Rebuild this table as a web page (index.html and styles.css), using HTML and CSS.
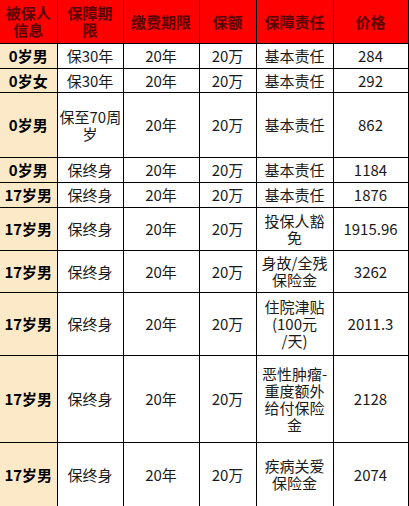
FILE: index.html
```html
<!DOCTYPE html>
<html lang="zh">
<head>
<meta charset="utf-8">
<title>保险价格表</title>
<link rel="stylesheet" href="styles.css">
</head>
<body>
<table class="tbl">
  <colgroup>
    <col class="c1"><col class="c2"><col class="c3"><col class="c4"><col class="c5"><col class="c6">
  </colgroup>
  <tr class="head">
    <th>被保人<br>信息</th><th>保障期<br>限</th><th>缴费期限</th><th>保额</th><th>保障责任</th><th>价格</th>
  </tr>
  <tr class="h25"><td class="who">0岁男</td><td>保30年</td><td>20年</td><td>20万</td><td>基本责任</td><td>284</td></tr>
  <tr class="h24"><td class="who">0岁女</td><td>保30年</td><td>20年</td><td>20万</td><td>基本责任</td><td>292</td></tr>
  <tr class="h65"><td class="who">0岁男</td><td>保至70周<br>岁</td><td>20年</td><td>20万</td><td>基本责任</td><td>862</td></tr>
  <tr class="h25"><td class="who">0岁男</td><td>保终身</td><td>20年</td><td>20万</td><td>基本责任</td><td>1184</td></tr>
  <tr class="h25"><td class="who">17岁男</td><td>保终身</td><td>20年</td><td>20万</td><td>基本责任</td><td>1876</td></tr>
  <tr class="h43"><td class="who">17岁男</td><td>保终身</td><td>20年</td><td>20万</td><td>投保人豁<br>免</td><td>1915.96</td></tr>
  <tr class="h42"><td class="who">17岁男</td><td>保终身</td><td>20年</td><td>20万</td><td>身故/全残<br>保险金</td><td>3262</td></tr>
  <tr class="h63"><td class="who">17岁男</td><td>保终身</td><td>20年</td><td>20万</td><td>住院津贴<br>(100元<br>/天)</td><td>2011.3</td></tr>
  <tr class="h87"><td class="who">17岁男</td><td>保终身</td><td>20年</td><td>20万</td><td>恶性肿瘤-<br>重度额外<br>给付保险<br>金</td><td>2128</td></tr>
  <tr class="h64"><td class="who">17岁男</td><td>保终身</td><td>20年</td><td>20万</td><td>疾病关爱<br>保险金</td><td>2074</td></tr>
</table>
</body>
</html>
```
FILE: styles.css
```css
html, body {
  margin: 0;
  padding: 0;
  background: #ffffff;
}
.tbl {
  border-collapse: collapse;
  table-layout: fixed;
  width: 408px;
  font-family: "Noto Sans CJK SC", "Noto Sans", sans-serif;
  font-size: 15px;
  line-height: 17px;
  color: #1a1a1a;
}
.c1 { width: 57px; }
.c2 { width: 66px; }
.c3 { width: 76px; }
.c4 { width: 57px; }
.c5 { width: 77px; }
.c6 { width: 75px; }
.tbl th, .tbl td {
  border: 1px solid #000000;
  padding: 0 2px;
  text-align: center;
  vertical-align: middle;
  white-space: nowrap;
  overflow: hidden;
}
.tbl tr:first-child th { border-top: none; }
.tbl th:first-child, .tbl td:first-child { border-left: none; }
.head { height: 43px; }
.head th {
  background: #ff0000;
  color: #5a0000;
  font-weight: bold;
  line-height: 17px;
}
.who {
  background: #fce9c8;
  font-weight: bold;
  color: #000000;
}
.h24 { height: 24px; }
.h25 { height: 25px; }
.h42 { height: 42px; }
.h43 { height: 43px; }
.h63 { height: 63px; }
.h64 { height: 64px; }
.h65 { height: 65px; }
.h87 { height: 87px; }
```
